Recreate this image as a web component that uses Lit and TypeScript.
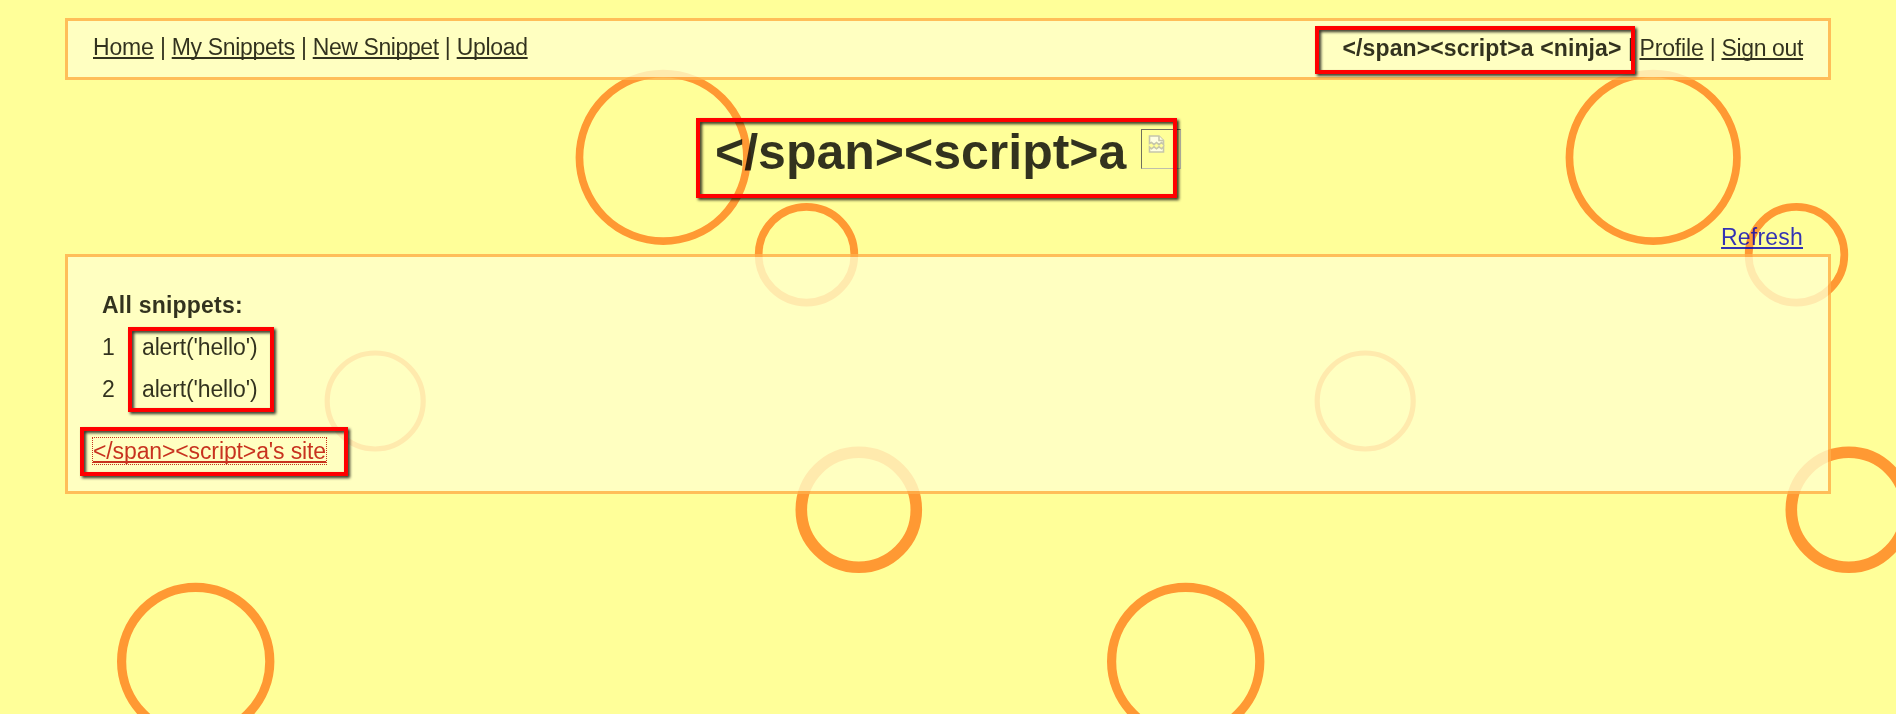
import { LitElement, html, css, svg } from "lit";
import { customElement } from "lit/decorators.js";

const TILE = 990;
// [cx, cy, outer radius, stroke width] of the rings in one background tile
const RINGS = [
  [663.2, 157.4, 87.6, 7.7],
  [806.5, 254.7, 51.7, 7.7],
  [375.2, 401, 50.6, 5.2],
  [858.8, 509.7, 63.3, 11.6],
  [195.7, 661.4, 78.7, 9.2],
];

@customElement("app-root")
export class AppRoot extends LitElement {
  static styles = css`
    :host {
      display: block;
      position: relative;
      box-sizing: border-box;
      width: 100%;
      height: 714px;
      overflow: hidden;
      padding: 18px 65px 0;
      background: #ffff99;
      color: #000;
      font: 23px/26px "Liberation Sans", Arial, sans-serif;
    }
    * { box-sizing: border-box; }
    .rings { position: absolute; left: 0; top: 0; width: 1980px; height: 714px; }
    .ring { fill: none; stroke: #ff9933; }
    .page { position: relative; display: flex; flex-direction: column; }
    .panel {
      background: #ffffcc;
      border: 3px solid #ffaf4a;
      opacity: 0.8;
    }
    .bar { height: 62px; padding: 13px 25px 0; display: flex; justify-content: space-between; }
    .menu { white-space: pre; }
    .user { padding-top: 1px; }
    a {
      color: inherit;
      text-decoration: underline;
      text-decoration-thickness: 2px;
      text-underline-offset: 2px;
      text-decoration-skip-ink: none;
    }
    .sep { letter-spacing: -0.27px; }
    .t1 { letter-spacing: -0.15px; }
    .t2 { letter-spacing: -0.32px; }
    .t3 { letter-spacing: -0.4px; }
    .t4 { letter-spacing: -0.32px; }
    .t5 { letter-spacing: -0.17px; }
    .t6 { letter-spacing: -0.36px; }
    .name { letter-spacing: 0.12px; }
    .title {
      margin: 0;
      height: 144px;
      padding: 43px 0 0 650px;
      display: flex;
      align-items: flex-start;
      gap: 15px;
      opacity: 0.8;
      font-size: 50px;
      line-height: 58px;
      white-space: nowrap;
    }
    .broken {
      flex: none;
      width: 40px;
      height: 40px;
      margin-top: 6px;
      padding: 5px 6px;
      border: 1px solid;
      border-color: #4d4d4d #b0b0b0 #b0b0b0 #4d4d4d;
    }
    .broken svg { display: block; width: 17px; height: 18px; }
    .shard { fill: #fffff4; stroke: #b8b8b0; stroke-width: 1.6; }
    .tools { height: 30px; padding-right: 28px; text-align: right; opacity: 0.8; color: #0000bb; }
    .refresh { letter-spacing: 0.2px; }
    .list { height: 240px; padding: 35px 25px 0; display: flex; flex-direction: column; align-items: flex-start; }
    .heading { padding-left: 9px; font-weight: bold; letter-spacing: 0.22px; margin-bottom: 16px; }
    .row { display: flex; padding-left: 9px; margin-bottom: 16px; }
    .num { width: 40px; }
    .code { letter-spacing: -0.14px; }
    .site {
      margin: 19px 0 0 -1px;
      height: 28px;
      border: 1px dotted #bb0000;
      color: #bb0000;
      letter-spacing: -0.12px;
    }
    .mark {
      position: absolute;
      border: 4px solid #f00;
      filter: drop-shadow(2px 2px 1.5px rgba(0, 0, 0, 0.8));
    }
    .m1 { left: 1315px; top: 26px; width: 320px; height: 48px; }
    .m2 { left: 696px; top: 118px; width: 481px; height: 80px; }
    .m3 { left: 128px; top: 327px; width: 146px; height: 85px; }
    .m4 { left: 80px; top: 427px; width: 268px; height: 49px; }
  `;

  render() {
    const sep = html`<span class="sep"> | </span>`;
    return html`
      <svg class="rings" viewBox="0 0 1980 714">
        ${[0, TILE].map((dx) =>
          RINGS.map(
            ([x, y, r, w]) =>
              svg`<circle class="ring" cx=${x + dx} cy=${y} r=${r - w / 2} stroke-width=${w}></circle>`
          )
        )}
      </svg>
      <div class="page">
        <header class="panel bar">
          <nav class="menu"><a class="t1">Home</a>${sep}<a class="t2">My Snippets</a>${sep}<a class="t3">New Snippet</a>${sep}<a class="t4">Upload</a></nav>
          <div class="menu user"><b class="name">${"</span><script>a <ninja>"}</b>${sep}<a class="t5">Profile</a>${sep}<a class="t6">Sign out</a></div>
        </header>
        <h1 class="title">
          <span>${"</span><script>a"}</span>
          <span class="broken">
            <svg viewBox="0 0 17 18">
              <path class="shard" d="M1.500 8.500V1h9.500l4.500 4.500v4L13.500 7.500 11 9.700 8.500 7.500 6 9.700 3.500 7.500z" />
              <path class="shard" d="M11 1v4.500h4.500" />
              <path class="shard" d="M1.500 17v-5l2 1.800L6 11.800l2.500 2 2.500-2 2.500 2 2-2V17z" />
            </svg>
          </span>
        </h1>
        <div class="tools"><a class="refresh">Refresh</a></div>
        <main class="panel list">
          <div class="heading">All snippets:</div>
          ${[1, 2].map(
            (n) => html`<div class="row"><span class="num">${n}</span><span class="code">alert('hello')</span></div>`
          )}
          <a class="site">${"</span><script>a's site"}</a>
        </main>
      </div>
      <div class="mark m1"></div>
      <div class="mark m2"></div>
      <div class="mark m3"></div>
      <div class="mark m4"></div>
    `;
  }
}
